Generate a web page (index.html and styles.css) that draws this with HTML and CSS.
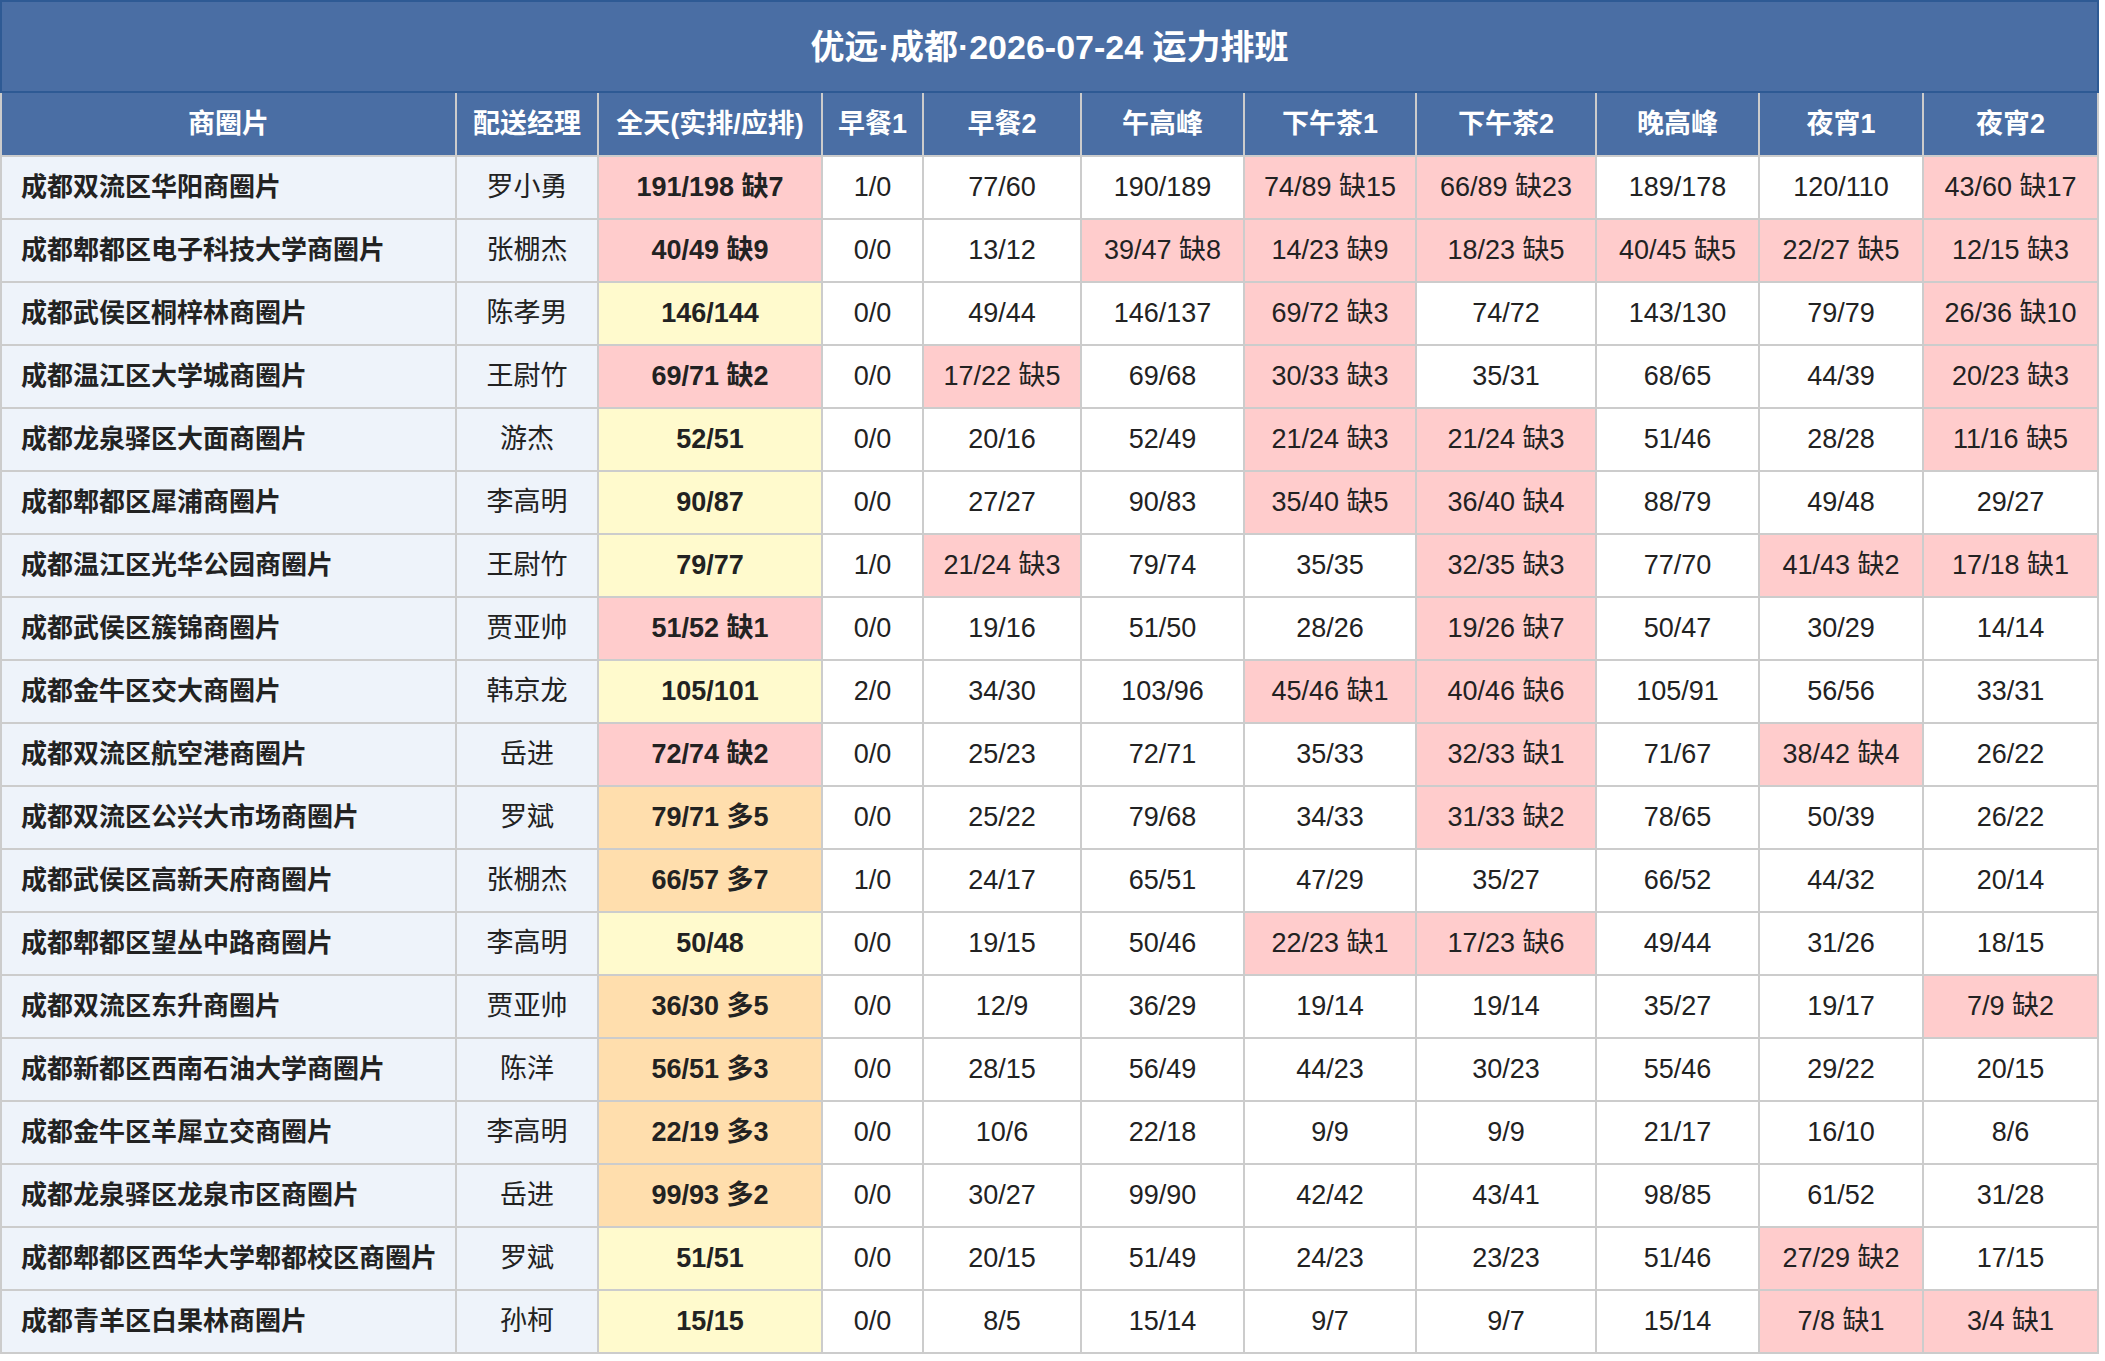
FILE: index.html
```html
<!DOCTYPE html>
<html lang="zh-CN">
<head>
<meta charset="utf-8">
<title>优远·成都·2026-07-24 运力排班</title>
<link rel="stylesheet" href="styles.css">
</head>
<body>
<table class="sched">
  <colgroup>
    <col class="c-area"><col class="c-mgr"><col class="c-day"><col class="c-b1"><col class="c-b2"><col class="c-noon"><col class="c-t1"><col class="c-t2"><col class="c-eve"><col class="c-n1"><col class="c-n2">
  </colgroup>
  <thead>
    <tr><th class="title" colspan="11">优远·成都·2026-07-24 运力排班</th></tr>
    <tr class="head">
      <th>商圈片</th><th>配送经理</th><th>全天(实排/应排)</th><th>早餐1</th><th>早餐2</th><th>午高峰</th><th>下午茶1</th><th>下午茶2</th><th>晚高峰</th><th>夜宵1</th><th>夜宵2</th>
    </tr>
  </thead>
  <tbody>
    <tr><td class="area">成都双流区华阳商圈片</td><td class="mgr">罗小勇</td><td class="day short">191/198 缺7</td><td>1/0</td><td>77/60</td><td>190/189</td><td class="short">74/89 缺15</td><td class="short">66/89 缺23</td><td>189/178</td><td>120/110</td><td class="short">43/60 缺17</td></tr>
    <tr><td class="area">成都郫都区电子科技大学商圈片</td><td class="mgr">张棚杰</td><td class="day short">40/49 缺9</td><td>0/0</td><td>13/12</td><td class="short">39/47 缺8</td><td class="short">14/23 缺9</td><td class="short">18/23 缺5</td><td class="short">40/45 缺5</td><td class="short">22/27 缺5</td><td class="short">12/15 缺3</td></tr>
    <tr><td class="area">成都武侯区桐梓林商圈片</td><td class="mgr">陈孝男</td><td class="day fit">146/144</td><td>0/0</td><td>49/44</td><td>146/137</td><td class="short">69/72 缺3</td><td>74/72</td><td>143/130</td><td>79/79</td><td class="short">26/36 缺10</td></tr>
    <tr><td class="area">成都温江区大学城商圈片</td><td class="mgr">王尉竹</td><td class="day short">69/71 缺2</td><td>0/0</td><td class="short">17/22 缺5</td><td>69/68</td><td class="short">30/33 缺3</td><td>35/31</td><td>68/65</td><td>44/39</td><td class="short">20/23 缺3</td></tr>
    <tr><td class="area">成都龙泉驿区大面商圈片</td><td class="mgr">游杰</td><td class="day fit">52/51</td><td>0/0</td><td>20/16</td><td>52/49</td><td class="short">21/24 缺3</td><td class="short">21/24 缺3</td><td>51/46</td><td>28/28</td><td class="short">11/16 缺5</td></tr>
    <tr><td class="area">成都郫都区犀浦商圈片</td><td class="mgr">李高明</td><td class="day fit">90/87</td><td>0/0</td><td>27/27</td><td>90/83</td><td class="short">35/40 缺5</td><td class="short">36/40 缺4</td><td>88/79</td><td>49/48</td><td>29/27</td></tr>
    <tr><td class="area">成都温江区光华公园商圈片</td><td class="mgr">王尉竹</td><td class="day fit">79/77</td><td>1/0</td><td class="short">21/24 缺3</td><td>79/74</td><td>35/35</td><td class="short">32/35 缺3</td><td>77/70</td><td class="short">41/43 缺2</td><td class="short">17/18 缺1</td></tr>
    <tr><td class="area">成都武侯区簇锦商圈片</td><td class="mgr">贾亚帅</td><td class="day short">51/52 缺1</td><td>0/0</td><td>19/16</td><td>51/50</td><td>28/26</td><td class="short">19/26 缺7</td><td>50/47</td><td>30/29</td><td>14/14</td></tr>
    <tr><td class="area">成都金牛区交大商圈片</td><td class="mgr">韩京龙</td><td class="day fit">105/101</td><td>2/0</td><td>34/30</td><td>103/96</td><td class="short">45/46 缺1</td><td class="short">40/46 缺6</td><td>105/91</td><td>56/56</td><td>33/31</td></tr>
    <tr><td class="area">成都双流区航空港商圈片</td><td class="mgr">岳进</td><td class="day short">72/74 缺2</td><td>0/0</td><td>25/23</td><td>72/71</td><td>35/33</td><td class="short">32/33 缺1</td><td>71/67</td><td class="short">38/42 缺4</td><td>26/22</td></tr>
    <tr><td class="area">成都双流区公兴大市场商圈片</td><td class="mgr">罗斌</td><td class="day over">79/71 多5</td><td>0/0</td><td>25/22</td><td>79/68</td><td>34/33</td><td class="short">31/33 缺2</td><td>78/65</td><td>50/39</td><td>26/22</td></tr>
    <tr><td class="area">成都武侯区高新天府商圈片</td><td class="mgr">张棚杰</td><td class="day over">66/57 多7</td><td>1/0</td><td>24/17</td><td>65/51</td><td>47/29</td><td>35/27</td><td>66/52</td><td>44/32</td><td>20/14</td></tr>
    <tr><td class="area">成都郫都区望丛中路商圈片</td><td class="mgr">李高明</td><td class="day fit">50/48</td><td>0/0</td><td>19/15</td><td>50/46</td><td class="short">22/23 缺1</td><td class="short">17/23 缺6</td><td>49/44</td><td>31/26</td><td>18/15</td></tr>
    <tr><td class="area">成都双流区东升商圈片</td><td class="mgr">贾亚帅</td><td class="day over">36/30 多5</td><td>0/0</td><td>12/9</td><td>36/29</td><td>19/14</td><td>19/14</td><td>35/27</td><td>19/17</td><td class="short">7/9 缺2</td></tr>
    <tr><td class="area">成都新都区西南石油大学商圈片</td><td class="mgr">陈洋</td><td class="day over">56/51 多3</td><td>0/0</td><td>28/15</td><td>56/49</td><td>44/23</td><td>30/23</td><td>55/46</td><td>29/22</td><td>20/15</td></tr>
    <tr><td class="area">成都金牛区羊犀立交商圈片</td><td class="mgr">李高明</td><td class="day over">22/19 多3</td><td>0/0</td><td>10/6</td><td>22/18</td><td>9/9</td><td>9/9</td><td>21/17</td><td>16/10</td><td>8/6</td></tr>
    <tr><td class="area">成都龙泉驿区龙泉市区商圈片</td><td class="mgr">岳进</td><td class="day over">99/93 多2</td><td>0/0</td><td>30/27</td><td>99/90</td><td>42/42</td><td>43/41</td><td>98/85</td><td>61/52</td><td>31/28</td></tr>
    <tr><td class="area">成都郫都区西华大学郫都校区商圈片</td><td class="mgr">罗斌</td><td class="day fit">51/51</td><td>0/0</td><td>20/15</td><td>51/49</td><td>24/23</td><td>23/23</td><td>51/46</td><td class="short">27/29 缺2</td><td>17/15</td></tr>
    <tr><td class="area">成都青羊区白果林商圈片</td><td class="mgr">孙柯</td><td class="day fit">15/15</td><td>0/0</td><td>8/5</td><td>15/14</td><td>9/7</td><td>9/7</td><td>15/14</td><td class="short">7/8 缺1</td><td class="short">3/4 缺1</td></tr>
  </tbody>
</table>
</body>
</html>
```

FILE: styles.css
```css
html, body {
  margin: 0;
  padding: 0;
  background: #ffffff;
}

body {
  font-family: "Liberation Sans", "Noto Sans CJK SC", sans-serif;
  color: #222222;
}

.sched {
  border-collapse: collapse;
  table-layout: fixed;
  width: 2097px;
  font-size: 27px;
  line-height: 37px;
}

.c-area { width: 455px; }
.c-mgr  { width: 142px; }
.c-day  { width: 224px; }
.c-b1   { width: 101px; }
.c-b2   { width: 158px; }
.c-noon { width: 163px; }
.c-t1   { width: 172px; }
.c-t2   { width: 180px; }
.c-eve  { width: 163px; }
.c-n1   { width: 164px; }
.c-n2   { width: 175px; }

.sched th,
.sched td {
  border: 2px solid #cccccc;
  padding: 12px 0;
  text-align: center;
  white-space: nowrap;
  overflow: hidden;
}

.sched .title {
  background: #4a6ea4;
  color: #ffffff;
  font-size: 34px;
  font-weight: 700;
  line-height: 40px;
  padding: 25px 0 24px;
  border: 2px solid #2e5a94;
}

.head th {
  background: #4a6ea4;
  color: #ffffff;
  font-weight: 700;
  padding: 13px 0 12px;
}

.sched td {
  background: #ffffff;
}

.sched td.area {
  background: #eef3fa;
  font-size: 26px;
  font-weight: 700;
  text-align: left;
  padding-left: 19px;
}

.sched td.mgr {
  background: #eef3fa;
}

.sched td.day {
  font-weight: 700;
}

.sched td.short {
  background: #ffcccc;
}

.sched td.fit {
  background: #fffacd;
}

.sched td.over {
  background: #ffdead;
}
```
